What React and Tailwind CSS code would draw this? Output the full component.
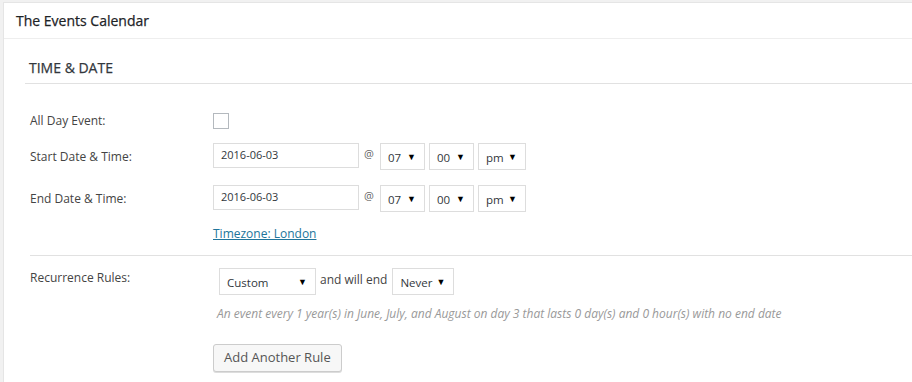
import React from 'react';

function FakeSelect({ value, width, className = '' }) {
  return (
    <div
      className={`flex items-center justify-between h-[27px] border border-[#dddddd] bg-white pl-[7px] pr-[8px] text-[11.5px] text-[#32373c] ${className}`}
      style={{ width }}
    >
      <span className="pt-[3px]">{value}</span>
      <span className="text-[9px] text-black">▼</span>
    </div>
  );
}

function DateTimeRow({ label }) {
  return (
    <div className="flex items-center h-[27px]">
      <div className="w-[183px] text-[12px] text-[#444]">{label}</div>
      <div className="flex items-center">
        <div className="w-[146px] h-[25px] border border-[#dddddd] flex items-center pl-[7px] text-[11px] text-[#32373c] -mt-[2px]">
          2016-06-03
        </div>
        <span className="ml-[5px] mr-[6px] text-[11px] text-[#666] -mt-[4px]">@</span>
        <FakeSelect value="07" width={45} />
        <FakeSelect value="00" width={45} className="ml-[4px]" />
        <FakeSelect value="pm" width={48} className="ml-[4px]" />
      </div>
    </div>
  );
}

function App() {
  return (
    <div
      className="w-[912px] h-[382px] overflow-hidden bg-[#f1f1f1] pt-[2px] pl-[3px]"
      style={{ fontFamily: '"Open Sans", "Noto Sans", sans-serif' }}
    >
      <div className="w-[930px] h-[400px] bg-white border border-[#e5e5e5]">
        {/* Header */}
        <div className="h-[36px] border-b border-[#eeeeee] flex items-center pl-[12px] text-[14px] text-[#1d2327] [-webkit-text-stroke:0.25px_#1d2327]">
          The Events Calendar
        </div>

        {/* Time & date panel */}
        <div className="ml-[21px]">
          <div className="h-[45px] border-b border-[#e1e1e1] flex items-center pl-[4px] pt-[13px] text-[14px] text-[#32373c] uppercase [-webkit-text-stroke:0.25px_#32373c]">
            Time &amp; Date
          </div>

          <div className="pl-[5px]">
            <div className="flex items-center h-[16px] mt-[29px]">
              <div className="w-[183px] text-[12px] text-[#444]">All Day Event:</div>
              <div className="w-[16px] h-[16px] border border-[#b4b9be] bg-white" />
            </div>

            <div className="mt-[14px]">
              <DateTimeRow label="Start Date & Time:" />
            </div>
            <div className="mt-[15px]">
              <DateTimeRow label="End Date & Time:" />
            </div>

            <div className="ml-[183px] mt-[13px] text-[12px] text-[#21759b] underline">
              Timezone: London
            </div>
          </div>

          {/* Recurrence */}
          <div className="mt-[12px] ml-[5px] border-t border-[#e1e1e1] pt-[12px]">
            <div className="flex">
              <div className="w-[183px] text-[12px] text-[#444] pt-[1px]">Recurrence Rules:</div>
              <div className="pl-[6px]">
                <div className="flex items-center">
                  <FakeSelect value="Custom" width={97} />
                  <span className="ml-[4px] mr-[5px] text-[12px] text-[#444] -mt-[4px]">and will end</span>
                  <FakeSelect value="Never" width={62} />
                </div>
                <div className="mt-[10px] -ml-[2px] text-[12px] italic text-[#999]">
                  An event every 1 year(s) in June, July, and August on day 3 that lasts 0 day(s) and 0 hour(s) with no end date
                </div>
                <button className="mt-[21px] -ml-[6px] h-[28px] px-[10px] border border-[#cccccc] rounded-[3px] bg-[#f7f7f7] text-[13px] text-[#555] shadow-[0_1px_0_#dddddd]">
                  Add Another Rule
                </button>
              </div>
            </div>
          </div>
        </div>
      </div>
    </div>
  );
}

export default App;
